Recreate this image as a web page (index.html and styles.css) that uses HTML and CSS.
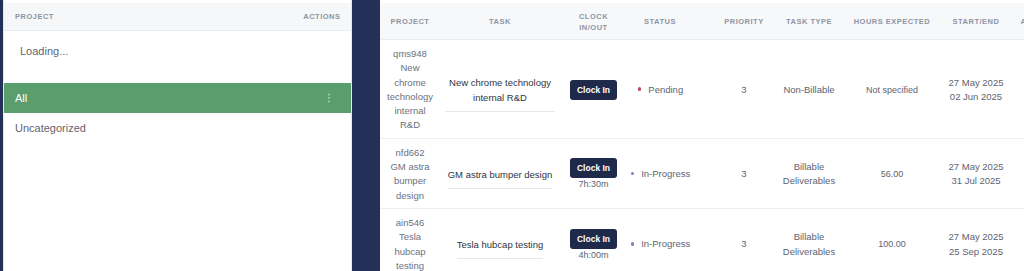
FILE: index.html
```html
<!DOCTYPE html>
<html lang="en">
<head>
<meta charset="utf-8">
<title>Tasks</title>
<link rel="stylesheet" href="styles.css">
</head>
<body>
<div class="app">
  <aside class="sidebar">
    <div class="side-head">
      <span>Project</span>
      <span>Actions</span>
    </div>
    <div class="loading">Loading...</div>
    <ul class="cats">
      <li class="cat active">
        <span>All</span>
        <svg class="kebab" width="4" height="10" viewBox="0 0 4 10"><circle cx="2" cy="1.5" r="0.9"/><circle cx="2" cy="5" r="0.9"/><circle cx="2" cy="8.5" r="0.9"/></svg>
      </li>
      <li class="cat"><span>Uncategorized</span></li>
    </ul>
  </aside>
  <div class="gutter"></div>
  <main class="main">
    <table class="tasks">
      <colgroup>
        <col class="c-project">
        <col class="c-task">
        <col class="c-clock">
        <col class="c-status">
        <col class="c-priority">
        <col class="c-type">
        <col class="c-hours">
        <col class="c-dates">
        <col class="c-actions">
      </colgroup>
      <thead>
        <tr>
          <th>Project</th>
          <th>Task</th>
          <th>Clock<br>In/Out</th>
          <th class="status-col">Status</th>
          <th>Priority</th>
          <th>Task Type</th>
          <th>Hours Expected</th>
          <th>Start/End</th>
          <th>Actions</th>
        </tr>
      </thead>
      <tbody>
        <tr>
          <td class="proj"><div>qms948</div><div>New chrome technology internal R&amp;D</div></td>
          <td class="task"><span class="task-name">New chrome technology internal R&amp;D</span></td>
          <td class="clock"><button class="clock-btn">Clock In</button></td>
          <td class="status-col"><span class="dot pending"></span>Pending</td>
          <td>3</td>
          <td>Non-Billable</td>
          <td class="hours">Not specified</td>
          <td>27 May 2025<br>02 Jun 2025</td>
          <td></td>
        </tr>
        <tr>
          <td class="proj"><div>nfd662</div><div>GM astra bumper design</div></td>
          <td class="task"><span class="task-name">GM astra bumper design</span></td>
          <td class="clock"><button class="clock-btn">Clock In</button><div class="time">7h:30m</div></td>
          <td class="status-col"><span class="dot progress"></span>In-Progress</td>
          <td>3</td>
          <td>Billable<br>Deliverables</td>
          <td class="hours">56.00</td>
          <td>27 May 2025<br>31 Jul 2025</td>
          <td></td>
        </tr>
        <tr>
          <td class="proj"><div>ain546</div><div>Tesla hubcap testing</div></td>
          <td class="task"><span class="task-name">Tesla hubcap testing</span></td>
          <td class="clock"><button class="clock-btn">Clock In</button><div class="time">4h:00m</div></td>
          <td class="status-col"><span class="dot progress"></span>In-Progress</td>
          <td>3</td>
          <td>Billable<br>Deliverables</td>
          <td class="hours">100.00</td>
          <td>27 May 2025<br>25 Sep 2025</td>
          <td></td>
        </tr>
      </tbody>
    </table>
  </main>
</div>
</body>
</html>
```

FILE: styles.css
```css
* { box-sizing: border-box; }
html, body {
  margin: 0;
  padding: 0;
  height: 271px;
  overflow: hidden;
  background: #243057;
  font-family: "Liberation Sans", Arial, sans-serif;
}
.app {
  display: flex;
  height: 271px;
}
.sidebar {
  width: 349px;
  margin-left: 3px;
  background: #fff;
  border-left: 1px solid #e4e7ed;
  border-right: 1px solid #e4e7ed;
  padding-top: 3px;
  flex: none;
}
.side-head {
  height: 28px;
  background: #f6f7f9;
  border-bottom: 1px solid #e8ebf0;
  display: flex;
  justify-content: space-between;
  align-items: center;
  padding: 0 10.5px 0 11px;
  font-size: 7.5px;
  font-weight: bold;
  letter-spacing: 0.5px;
  text-transform: uppercase;
  color: #8d95a5;
}
.loading {
  padding: 13px 16px 25px;
  line-height: 14px;
  font-size: 11px;
  color: #5f6571;
}
.cats {
  list-style: none;
  margin: 0;
  padding: 0;
}
.cat {
  height: 30px;
  display: flex;
  align-items: center;
  justify-content: space-between;
  padding: 0 20px 0 11px;
  font-size: 11px;
  color: #5f6571;
}
.cat.active {
  background: #5a9e6e;
  color: #fff;
}
.kebab { fill: rgba(255, 255, 255, 0.55); }
.gutter {
  width: 28px;
  flex: none;
}
.main {
  flex: 1;
  min-width: 0;
  background: #fff;
  padding-top: 3px;
  overflow: hidden;
}
.tasks {
  table-layout: fixed;
  width: 685px;
  border-collapse: separate;
  border-spacing: 0;
  font-size: 9.5px;
  color: #5d6372;
}
.c-project { width: 60px; }
.c-task { width: 120px; }
.c-clock { width: 67px; }
.c-status { width: 88px; }
.c-priority { width: 58px; }
.c-type { width: 72px; }
.c-hours { width: 94px; }
.c-dates { width: 74px; }
.c-actions { width: 52px; }
.tasks th {
  height: 37px;
  background: #f7f8fa;
  border-bottom: 1px solid #eaecf0;
  font-size: 7.5px;
  font-weight: bold;
  letter-spacing: 0.5px;
  text-transform: uppercase;
  color: #8d95a5;
  line-height: 11px;
  text-align: center;
  vertical-align: middle;
  padding: 1px 4px 0;
  white-space: nowrap;
}
.tasks td {
  text-align: center;
  vertical-align: middle;
  line-height: 14.3px;
  padding: 7px 6px 5px;
  border-bottom: 1px solid #eceef2;
}
.tasks th.status-col {
  padding-left: 10px;
  padding-right: 32px;
}
.tasks td.status-col {
  padding-left: 3px;
  padding-right: 24px;
  white-space: nowrap;
}
.tasks td.proj { color: #6b7180; }
.tasks td.task { padding-left: 5px; padding-right: 5px; }
.task-name {
  display: inline-block;
  padding: 7px 0 6px;
  border-bottom: 1px solid #e3e6eb;
  color: #2f3542;
  line-height: 15px;
}
.clock-btn {
  display: inline-block;
  height: 20px;
  padding: 0 7px;
  border: 0;
  border-radius: 3px;
  background: #1f2949;
  color: #fff;
  font-family: inherit;
  font-size: 8.5px;
  font-weight: bold;
  line-height: 20px;
  vertical-align: top;
}
.time {
  margin-top: 1px;
  font-size: 9px;
  line-height: 11px;
  color: #5d6372;
}
.dot {
  display: inline-block;
  width: 3.5px;
  height: 3.5px;
  border-radius: 50%;
  margin-right: 7px;
  vertical-align: middle;
  position: relative;
  top: -1px;
}
.dot.pending { background: #c4455a; }
.dot.progress { background: #7b7fc1; }
.tasks td.hours { font-size: 9px; }
```
